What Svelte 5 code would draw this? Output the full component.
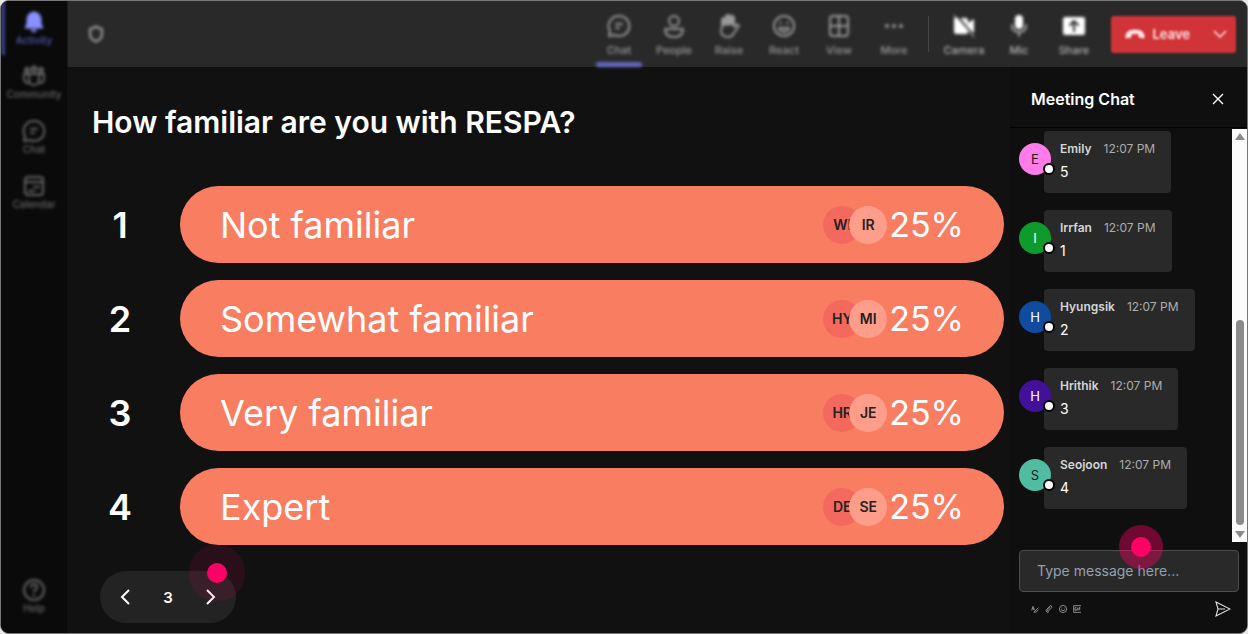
<script>
  const question = "How familiar are you with RESPA?";
  const options = [
    { label: "Not familiar", voters: ["WI", "IR"], percent: 25 },
    { label: "Somewhat familiar", voters: ["HY", "MI"], percent: 25 },
    { label: "Very familiar", voters: ["HR", "JE"], percent: 25 },
    { label: "Expert", voters: ["DE", "SE"], percent: 25 },
  ];
  const messages = [
    { name: "Emily", time: "12:07 PM", text: "5", color: "#ff7ce9", ink: "#1a1a1a" },
    { name: "Irrfan", time: "12:07 PM", text: "1", color: "#0f9b2c", ink: "#ffffff" },
    { name: "Hyungsik", time: "12:07 PM", text: "2", color: "#0f4c9e", ink: "#ffffff" },
    { name: "Hrithik", time: "12:07 PM", text: "3", color: "#43109a", ink: "#ffffff" },
    { name: "Seojoon", time: "12:07 PM", text: "4", color: "#50bda3", ink: "#1a1a1a" },
  ];
  const rail = [
    { label: "Activity", icon: "bell" },
    { label: "Community", icon: "community" },
    { label: "Chat", icon: "chat" },
    { label: "Calendar", icon: "calendar" },
  ];
  const tools = [
    { label: "Chat", icon: "chat" },
    { label: "People", icon: "person" },
    { label: "Raise", icon: "hand" },
    { label: "React", icon: "smile" },
    { label: "View", icon: "grid" },
    { label: "More", icon: "dots" },
  ];
  const devices = [
    { label: "Camera", icon: "camera" },
    { label: "Mic", icon: "mic" },
    { label: "Share", icon: "share" },
  ];

  let page = $state(3);
  let activeTool = $state("Chat");
  let draft = $state("");
</script>

{#snippet icon(name)}
  <svg viewBox="0 0 24 24" width="24" height="24" fill="none" stroke="currentColor" stroke-width="2" stroke-linecap="round" stroke-linejoin="round" aria-hidden="true">
    {#if name === "bell"}
      <path d="M12 2a7 7 0 0 0-7 7v5l-2 4h18l-2-4V9a7 7 0 0 0-7-7zM9 20h6l-3 2z" fill="currentColor" stroke-width="1" />
    {:else if name === "community"}
      <path d="M2 10h20v5q0 4-5 4M2 10v5q0 4 5 4M7 10v6a5 5 0 0 0 10 0v-6" />
      <g fill="currentColor" fill-opacity="0.5"><circle cx="5" cy="6" r="2" /><circle cx="12" cy="5" r="2.4" /><circle cx="19" cy="6" r="2" /></g>
    {:else if name === "chat"}
      <path d="M12 2a10 10 0 1 1-4 19l-6 1 1-5A10 10 0 0 1 12 2z" />
      <path d="M9 10h6M9 14h3" />
    {:else if name === "calendar"}
      <rect x="3" y="3" width="18" height="18" rx="3" />
      <path d="M3 8h18M12 13h5M7 17h5" />
    {:else if name === "help"}
      <circle cx="12" cy="12" r="10" />
      <path d="M9 9a3 3 0 1 1 4 3q-1 1-1 2M12 17v1" />
    {:else if name === "person"}
      <circle cx="12" cy="7" r="5" />
      <path d="M3 15h18q0 8-9 8t-9-8z" />
    {:else if name === "hand"}
      <path d="M5 13V6q0-2 2-2t2 2V3q0-2 2-2t2 2v1q0-2 2-2t2 2v9l2-2q2-1 3 1l-5 7q-2 4-6 4-7 0-7-7z" />
      <path d="M5 12V6q0-2 2-2l4-3 4 1 2 2v7z" fill="currentColor" stroke="none" />
    {:else if name === "smile"}
      <circle cx="12" cy="12" r="10" />
      <path d="M8 9h1M15 9h1M7 14h10q-2 4-5 4t-5-4z" />
    {:else if name === "grid"}
      <rect x="3" y="2" width="18" height="20" rx="3" />
      <path d="M12 2v20M3 12h18" />
    {:else if name === "dots"}
      <g fill="currentColor" stroke="none"><circle cx="5" cy="12" r="2" /><circle cx="12" cy="12" r="2" /><circle cx="19" cy="12" r="2" /></g>
    {:else if name === "camera"}
      <path d="M2 4h12q2 0 2 3v10q0 3-2 3H4q-2 0-2-3zM16 9l6-4v14l-6-4z" fill="currentColor" stroke="none" />
      <path d="M6 3l15 18" stroke="#292929" stroke-width="2" />
      <path d="M2 1l20 22" stroke-width="1" />
    {:else if name === "mic"}
      <rect x="8" y="1" width="8" height="14" rx="4" fill="currentColor" stroke="none" />
      <path d="M5 11q0 7 7 7t7-7M12 18v4" stroke-opacity="0.6" />
    {:else if name === "share"}
      <rect x="1" y="3" width="22" height="18" rx="2" fill="currentColor" stroke="none" />
      <path d="M12 17V8M8 11l4-4 4 4" stroke="#292929" />
    {:else if name === "shield"}
      <path d="M12 2q4 3 8 3v7q0 7-8 10-8-3-8-10V5q4 0 8-3z" stroke-width="3" />
    {/if}
  </svg>
{/snippet}

<div class="window">
  <nav class="rail">
    {#each rail as item, i}
      <button class="rail-item" class:current={i === 0}>
        {@render icon(item.icon)}
        <span>{item.label}</span>
      </button>
    {/each}
    <button class="rail-item help">
      {@render icon("help")}
      <span>Help</span>
    </button>
  </nav>

  <div class="body">
    <header class="toolbar">
      <span class="shield">{@render icon("shield")}</span>
      <div class="tools">
        {#each tools as tool}
          <button class="tool" class:active={tool.label === activeTool} onclick={() => (activeTool = tool.label)}>
            {@render icon(tool.icon)}
            <span>{tool.label}</span>
          </button>
        {/each}
        <div class="divider"></div>
        {#each devices as device}
          <button class="tool device">
            {@render icon(device.icon)}
            <span>{device.label}</span>
          </button>
        {/each}
        <button class="leave">
          <svg viewBox="0 0 20 12" width="20" height="12" aria-hidden="true">
            <path d="M1 8q0-6 9-6t9 6v2l-5-1V6q-4-1-8 0v3l-5 1z" fill="currentColor" stroke="currentColor" stroke-linejoin="round" />
          </svg>
          <span>Leave</span>
          <svg viewBox="0 0 14 8" width="14" height="8" aria-hidden="true">
            <path d="M1 1l6 6 6-6" fill="none" stroke="currentColor" stroke-width="1.5" />
          </svg>
        </button>
      </div>
    </header>

    <div class="content">
      <main class="poll">
        <h1>{question}</h1>
        <ol>
          {#each options as option, i}
            <li>
              <span class="rank">{i + 1}</span>
              <button class="option">
                <span class="label">{option.label}</span>
                <span class="voters">
                  {#each option.voters as voter}
                    <span class="voter">{voter}</span>
                  {/each}
                </span>
                <span class="percent">{option.percent}%</span>
              </button>
            </li>
          {/each}
        </ol>
        <div class="pager">
          <button aria-label="Previous" onclick={() => page > 1 && page--}>
            <svg viewBox="0 0 10 16" width="10" height="16"><path d="M9 1L2 8l7 7" /></svg>
          </button>
          <span>{page}</span>
          <button aria-label="Next" onclick={() => page++}>
            <svg viewBox="0 0 10 16" width="10" height="16"><path d="M1 1l7 7-7 7" /></svg>
          </button>
          <i class="hotspot next"></i>
        </div>
      </main>

      <aside class="chat">
        <div class="chat-head">
          <h2>Meeting Chat</h2>
          <button aria-label="Close chat">
            <svg viewBox="0 0 12 12" width="12" height="12"><path d="M1 1l10 10M11 1L1 11" fill="none" stroke="currentColor" stroke-width="1.4" /></svg>
          </button>
        </div>
        <div class="history">
          <div class="messages">
            {#each messages as message}
              <article>
                <span class="avatar" style:background={message.color} style:color={message.ink}>
                  {message.name[0]}
                  <i class="status"></i>
                </span>
                <div class="bubble">
                  <div class="meta"><b>{message.name}</b><time>{message.time}</time></div>
                  <p>{message.text}</p>
                </div>
              </article>
            {/each}
          </div>
          <div class="scrollbar">
            <svg viewBox="0 0 10 7" width="10" height="7"><path d="M5 0l5 7H0z" /></svg>
            <div class="track"><div class="thumb"></div></div>
            <svg viewBox="0 0 10 7" width="10" height="7"><path d="M5 7l5-7H0z" /></svg>
          </div>
        </div>
        <form class="compose" onsubmit={(e) => e.preventDefault()}>
          <div class="field">
            <input aria-label="Message" placeholder="Type message here..." bind:value={draft} />
            <i class="hotspot write"></i>
          </div>
          <div class="actions">
            <button type="button" aria-label="Format">
              <svg viewBox="0 0 12 12" width="8" height="8"><path d="M1 8l2-6 2 6M2 6h3M4 11l7-7M5 11q3 1 6-4" /></svg>
            </button>
            <button type="button" aria-label="Attach">
              <svg viewBox="0 0 12 12" width="8" height="8"><path d="M8 3L4 7q-1 2 1 2l5-5q1-3-2-3L3 6q-3 3 0 5 2 0 3-1" /></svg>
            </button>
            <button type="button" aria-label="Emoji">
              <svg viewBox="0 0 12 12" width="8" height="8"><circle cx="6" cy="6" r="5.4" /><path d="M4 4v1M8 4v1M3 7q3 3 6 0" /></svg>
            </button>
            <button type="button" aria-label="GIF">
              <svg viewBox="0 0 12 12" width="8" height="8"><path d="M12 1H1v10h11M5 4H3v4h2V6M7 4v4M9 8V4h2M9 6h2" /></svg>
            </button>
            <button class="send" aria-label="Send">
              <svg viewBox="0 0 16 16" width="16" height="16"><path d="M1 1l14 7L1 15l2-7zM3 8h7" /></svg>
            </button>
          </div>
        </form>
      </aside>
    </div>
  </div>
</div>

<style>
  :global(body) {
    background: #e8e8e8;
  }
  .window {
    display: flex;
    box-sizing: border-box;
    min-height: 100vh;
    border: 1px solid #777;
    border-radius: 9px;
    overflow: hidden;
    background: #111;
    color: #fff;
    font-family: Inter, sans-serif;
  }
  button {
    padding: 0;
    border: 0;
    background: none;
    color: inherit;
    font: inherit;
    cursor: pointer;
  }
  svg {
    display: block;
    flex: none;
  }

  /* left rail */
  .rail {
    display: flex;
    flex-direction: column;
    flex: none;
    width: 66px;
    background: #0a0a0a;
  }
  .rail-item {
    display: flex;
    flex-direction: column;
    align-items: center;
    box-sizing: border-box;
    height: 55px;
    padding-top: 9px;
    color: #666;
    font-size: 10px;
    font-weight: 500;
    line-height: 12px;
    filter: blur(1px) blur(1px);
  }
  .rail-item.current {
    height: 54px;
    border-left: 4px solid #3b3f88;
    padding-right: 4px;
    color: #5558b8;
  }
  .rail-item.current svg {
    color: #8a90ff;
  }
  .help {
    margin: auto 0 9px;
  }

  .body {
    display: flex;
    flex: 1;
    flex-direction: column;
    min-width: 0;
  }
  .toolbar {
    display: flex;
    justify-content: space-between;
    height: 66px;
    padding: 0 11px 0 19px;
    background: #292929;
    border-left: 1px solid #1a1a1a;
  }
  .shield {
    align-self: center;
    color: #999;
    filter: blur(1px) blur(1px);
  }
  .shield svg {
    width: 18px;
    height: 20px;
  }
  .tools {
    display: flex;
    align-items: center;
  }
  .tool {
    display: flex;
    flex-direction: column;
    align-items: center;
    gap: 4px;
    box-sizing: border-box;
    width: 55px;
    height: 66px;
    padding-top: 13px;
    color: #999;
    font-size: 11px;
    font-weight: 500;
    line-height: 16px;
    filter: blur(1px) blur(1px);
  }
  .tool.active::after {
    content: "";
    width: 46px;
    height: 5px;
    border-radius: 2px;
    background: #6366bd;
  }
  .device {
    color: #b5b5b5;
  }
  .device svg {
    color: #fff;
  }
  .divider {
    width: 1px;
    height: 36px;
    margin: 0 8px 0 6px;
    background: #454545;
  }
  .leave {
    display: flex;
    align-items: center;
    gap: 8px;
    height: 37px;
    margin-left: 9px;
    padding: 0 9px 0 14px;
    border-radius: 3px;
    background: #d13438;
    color: #ffe4e4;
    font-size: 13px;
    font-weight: 600;
    filter: blur(1px);
  }
  .leave span {
    margin-right: 15px;
  }

  .content {
    display: flex;
    flex: 1;
  }
  .poll {
    display: flex;
    flex: 1;
    flex-direction: column;
    align-items: stretch;
    padding: 36px 6px 10px 25px;
  }
  h1 {
    margin: 0;
    font-size: 30px;
    font-weight: 600;
    line-height: 38px;
  }
  ol {
    display: flex;
    flex-direction: column;
    gap: 17px;
    margin: 45px 0 26px;
    padding: 0;
    list-style: none;
  }
  li {
    display: flex;
    align-items: center;
  }
  .rank {
    width: 56px;
    margin-right: 32px;
    font-size: 36px;
    font-weight: 600;
    text-align: center;
  }
  .option {
    display: flex;
    flex: 1;
    align-items: center;
    height: 77px;
    padding: 0 40px;
    border-radius: 40px;
    background: #f97d61;
    font-size: 36px;
    text-align: left;
  }
  .label {
    flex: 1;
  }
  .percent {
    font-size: 34px;
  }
  .voters {
    display: flex;
    margin-right: 2px;
  }
  .voter {
    width: 38px;
    border-radius: 50%;
    background: #f3695e;
    color: #222;
    font-size: 14px;
    font-weight: 600;
    line-height: 38px;
    text-align: center;
  }
  .voter + .voter {
    margin-left: -12px;
    background: #ff9d8b;
  }
  .pager {
    position: relative;
    display: flex;
    align-items: center;
    align-self: flex-start;
    justify-content: space-between;
    box-sizing: border-box;
    width: 136px;
    height: 52px;
    margin-left: 8px;
    padding: 0 20px;
    border-radius: 26px;
    background: #232323;
    font-size: 15px;
    font-weight: 600;
  }
  .pager path {
    fill: none;
    stroke: #fff;
    stroke-width: 2;
  }

  /* pulsing guide dots */
  .hotspot {
    position: absolute;
    width: 20px;
    height: 20px;
    border-radius: 50%;
    background: #ff0066;
    pointer-events: none;
  }
  .hotspot.next {
    top: -8px;
    right: 9px;
    box-shadow: 0 0 0 18px rgba(255, 0, 102, 0.1);
  }
  .hotspot.write {
    top: -13px;
    left: 112px;
    box-shadow: 0 0 0 12px rgba(255, 0, 102, 0.4);
  }

  /* chat panel */
  .chat {
    display: flex;
    flex: none;
    flex-direction: column;
    width: 237px;
    background: #0f0f0f;
  }
  .chat-head {
    display: flex;
    align-items: center;
    justify-content: space-between;
    box-sizing: border-box;
    height: 61px;
    padding: 3px 23px 0 21px;
    border-bottom: 1px solid #000;
  }
  h2 {
    margin: 0;
    font-size: 16px;
    font-weight: 600;
  }
  .history {
    display: flex;
    flex: 1;
    justify-content: space-between;
    padding-top: 1px;
  }
  .messages {
    display: flex;
    flex-direction: column;
    gap: 17px;
    padding: 2px 0 0 9px;
  }
  article {
    display: flex;
    align-items: flex-start;
  }
  .avatar {
    position: relative;
    z-index: 1;
    width: 32px;
    margin: 12px -7px 0 0;
    border-radius: 50%;
    font-size: 13px;
    line-height: 32px;
    text-align: center;
  }
  .status {
    position: absolute;
    right: -4px;
    bottom: 0;
    width: 8px;
    height: 8px;
    border: 2px solid #000;
    border-radius: 50%;
    background: #fff;
  }
  .bubble {
    padding: 9px 16px;
    border-radius: 4px;
    background: #292929;
  }
  .meta {
    display: flex;
    gap: 12px;
    color: #adadad;
    font-size: 12px;
    line-height: 18px;
  }
  .meta b {
    color: #d6d6d6;
    font-weight: 600;
  }
  .bubble p {
    margin: 2px 0 0;
    font-size: 14px;
    line-height: 24px;
  }
  .scrollbar {
    display: flex;
    flex-direction: column;
    align-items: center;
    gap: 6px;
    box-sizing: border-box;
    width: 15px;
    padding: 4px 0;
    background: #fcfcfc;
  }
  .scrollbar path {
    fill: #8b8b8b;
  }
  .track {
    display: flex;
    flex: 1;
    align-items: flex-end;
  }
  .thumb {
    width: 8px;
    height: 54%;
    border-radius: 4px;
    background: #8b8b8b;
  }
  .compose {
    padding: 8px 8px 16px 9px;
  }
  .field {
    position: relative;
  }
  input {
    box-sizing: border-box;
    width: 100%;
    height: 42px;
    padding: 0 17px 2px;
    border: 1px solid #4d4d4d;
    border-radius: 4px;
    outline: 0;
    background: #292929;
    color: #fff;
    font: 14px Inter, sans-serif;
  }
  input::placeholder {
    color: #94a0ae;
    opacity: 1;
  }
  .actions {
    display: flex;
    align-items: center;
    gap: 6px;
    padding: 9px 8px 0 12px;
  }
  .actions path,
  .actions circle {
    fill: none;
    stroke: #b5b5b5;
    stroke-width: 1.1;
  }
  .actions .send {
    margin-left: auto;
  }
  .actions .send path {
    stroke: #e0e0e0;
  }
</style>
